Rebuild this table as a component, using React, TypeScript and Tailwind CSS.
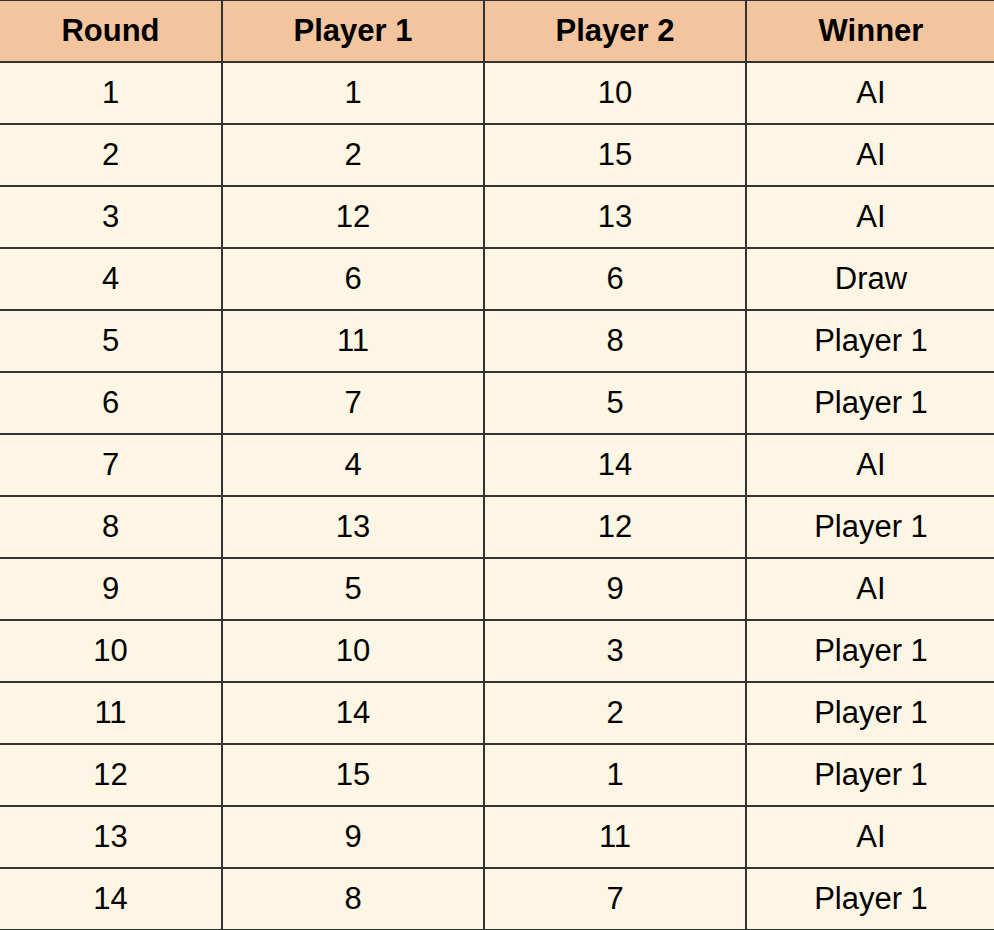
const ROWS: [number, number, number, string][] = [
  [1, 1, 10, 'AI'],
  [2, 2, 15, 'AI'],
  [3, 12, 13, 'AI'],
  [4, 6, 6, 'Draw'],
  [5, 11, 8, 'Player 1'],
  [6, 7, 5, 'Player 1'],
  [7, 4, 14, 'AI'],
  [8, 13, 12, 'Player 1'],
  [9, 5, 9, 'AI'],
  [10, 10, 3, 'Player 1'],
  [11, 14, 2, 'Player 1'],
  [12, 15, 1, 'Player 1'],
  [13, 9, 11, 'AI'],
  [14, 8, 7, 'Player 1'],
]

const HEADERS = ['Round', 'Player 1', 'Player 2', 'Winner']

export default function App() {
  return (
    <div className="h-[930px] w-[994px] overflow-hidden bg-[#fef6e4] font-['Liberation_Sans',Arial,sans-serif] text-[31px] text-black">
      <table className="-ml-[2px] -mt-px w-[997px] table-fixed border-collapse">
        <colgroup>
          <col className="w-[223px]" />
          <col className="w-[262px]" />
          <col className="w-[262px]" />
          <col className="w-[250px]" />
        </colgroup>
        <thead>
          <tr className="bg-[#f2c59f]">
            {HEADERS.map((h) => (
              <th key={h} className="h-[62px] border-2 border-[#333333] p-0 text-center font-bold">
                {h}
              </th>
            ))}
          </tr>
        </thead>
        <tbody>
          {ROWS.map((r) => (
            <tr key={r[0]} className="bg-[#fef6e4]">
              {r.map((v, i) => (
                <td key={i} className="h-[62px] border-2 border-[#333333] p-0 text-center">
                  {v}
                </td>
              ))}
            </tr>
          ))}
        </tbody>
      </table>
    </div>
  )
}
